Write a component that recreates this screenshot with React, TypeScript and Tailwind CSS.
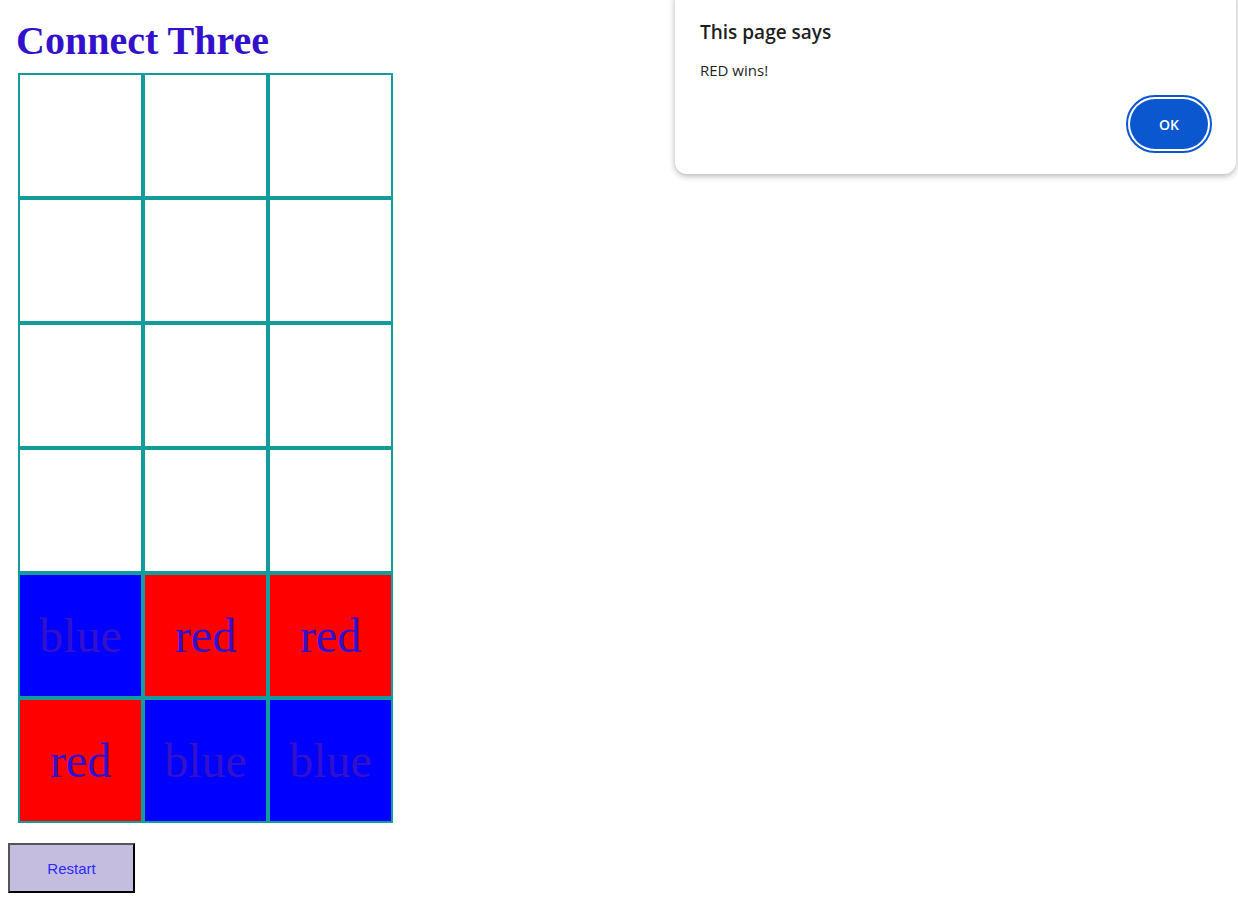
import React from 'react';

type Cell = '' | 'red' | 'blue';

const board: Cell[][] = [
  ['', '', ''],
  ['', '', ''],
  ['', '', ''],
  ['', '', ''],
  ['blue', 'red', 'red'],
  ['red', 'blue', 'blue'],
];

function Square({ value }: { value: Cell }) {
  const bg = value === 'red' ? 'bg-[#ff0000]' : value === 'blue' ? 'bg-[#0000ff]' : 'bg-white';
  return (
    <div
      className={`w-[125px] h-[125px] border-2 border-[#129c9c] flex items-center justify-center text-[48px] leading-none text-[#3311cc] ${bg}`}
      style={{ fontFamily: '"Liberation Serif", "Times New Roman", serif' }}
    >
      {value}
    </div>
  );
}

export default function App() {
  return (
    <div className="relative min-h-screen bg-white p-2">
      <h1
        className="pl-2 pt-[10px] text-[40px] font-bold leading-[45px] text-[#3311cc]"
        style={{ fontFamily: '"Liberation Serif", "Times New Roman", serif' }}
      >
        Connect Three
      </h1>

      {/* Board */}
      <div className="ml-[10px] mt-[10px] flex flex-col w-[375px]">
        {board.map((row, r) => (
          <div key={r} className="flex">
            {row.map((cell, c) => (
              <Square key={c} value={cell} />
            ))}
          </div>
        ))}
      </div>

      <button
        className="mt-5 w-[127px] h-[50px] bg-[#c5bde0] border-2 border-t-[#555555] border-l-[#555555] border-b-black border-r-black text-[15px] leading-none text-[#2a2aff]"
        style={{ fontFamily: '"Liberation Sans", Arial, sans-serif' }}
      >
        Restart
      </button>

      {/* Browser alert */}
      <div
        className="absolute left-[675px] top-[-12px] w-[561px] h-[186px] rounded-[12px] bg-white shadow-[0_2px_6px_rgba(0,0,0,0.3)] px-[25px] pt-[32px]"
        style={{ fontFamily: '"Open Sans", "Noto Sans", sans-serif' }}
      >
        <div className="text-[19px] font-semibold leading-[24px] text-[#1f1f1f]">This page says</div>
        <div className="mt-[17px] text-[15px] leading-[18px] text-[#1f1f1f]">RED wins!</div>
        <div className="flex justify-end mt-[16px] -mr-[1px]">
          <div className="rounded-full border-2 border-[#0b57d0] p-[2px]">
            <button className="w-[78px] h-[50px] rounded-full bg-[#0b57d0] text-[14px] font-semibold text-white">
              OK
            </button>
          </div>
        </div>
      </div>
    </div>
  );
}
